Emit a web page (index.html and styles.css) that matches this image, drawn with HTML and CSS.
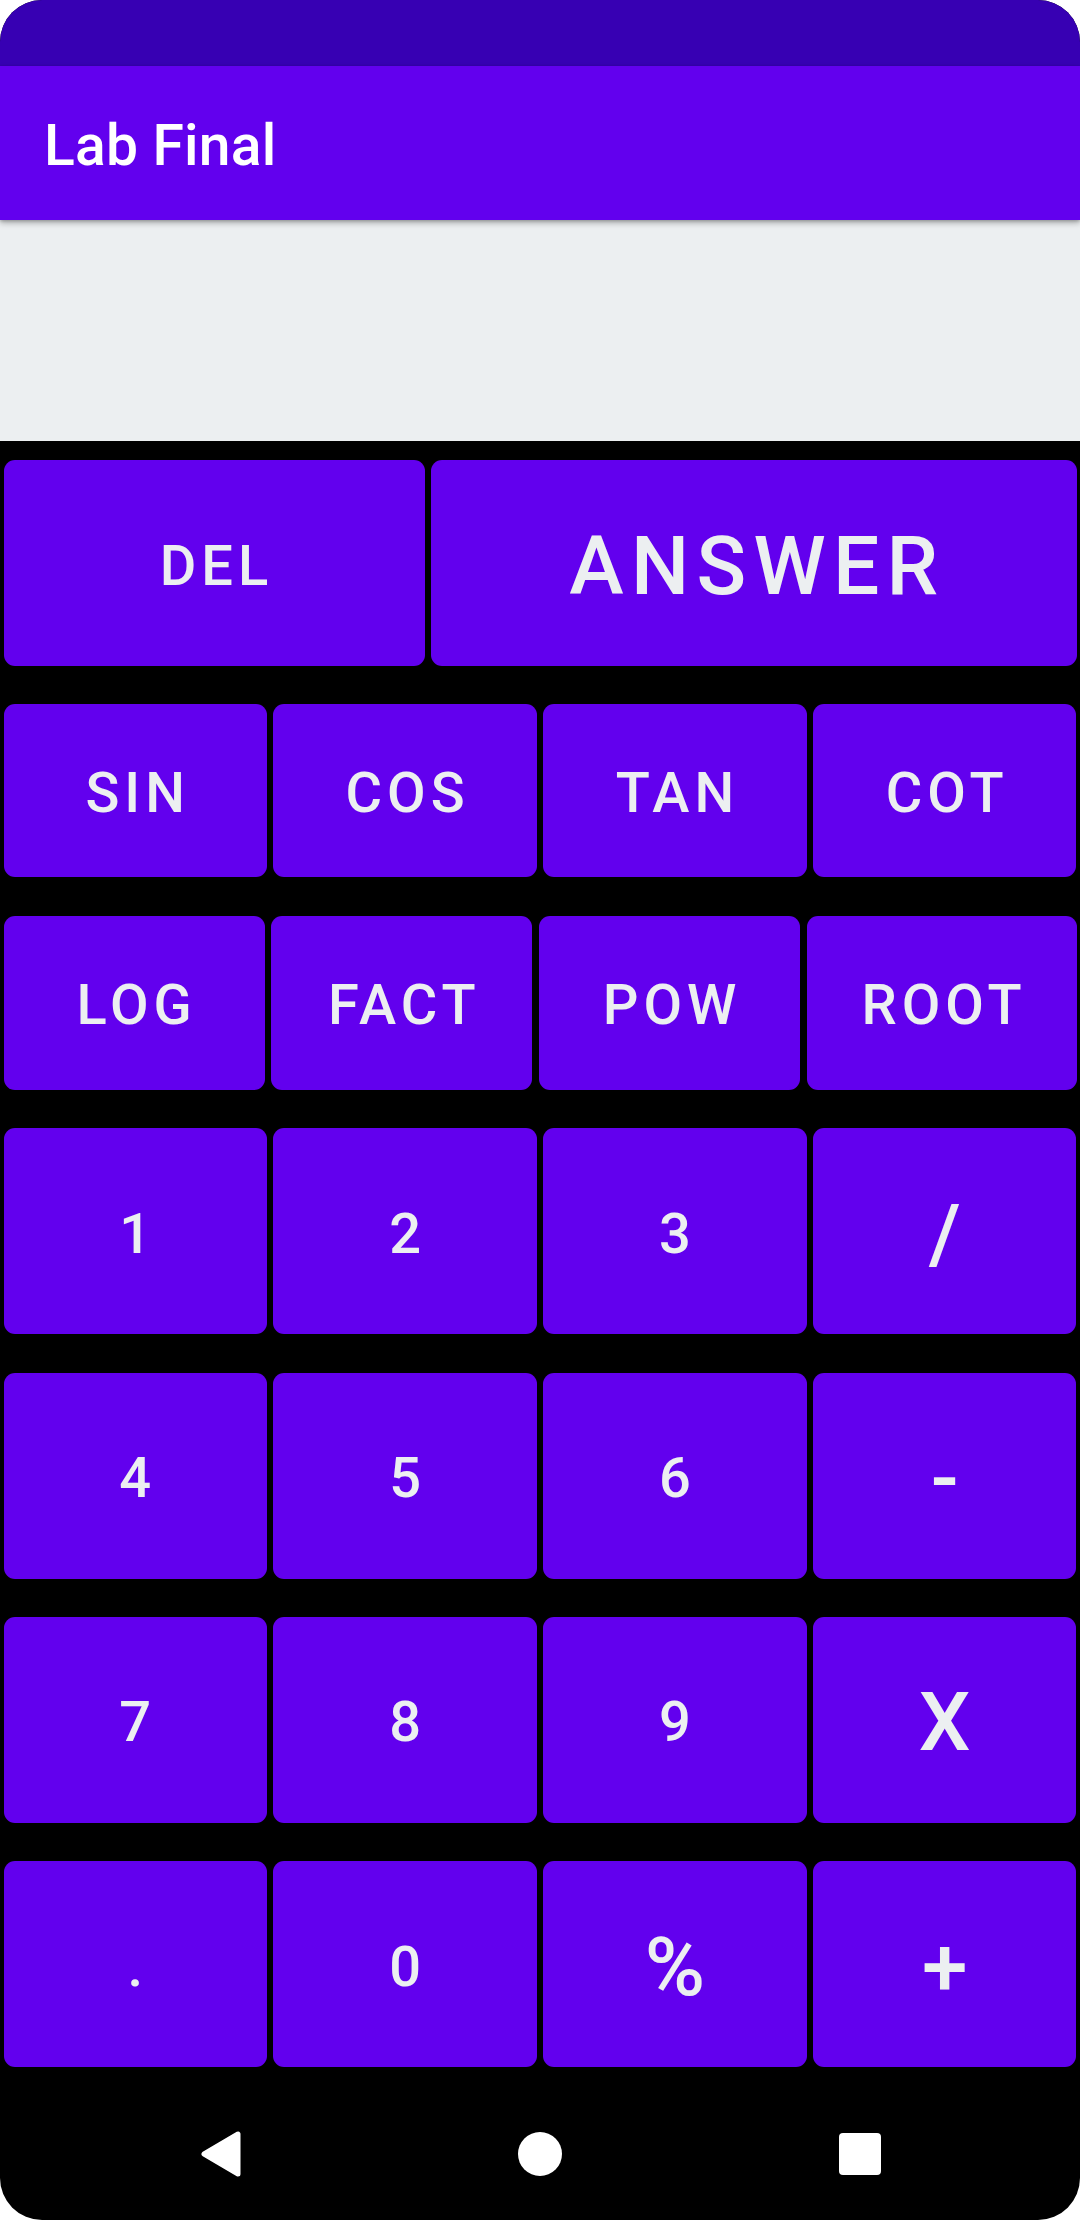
FILE: index.html
```html
<!DOCTYPE html>
<html>
<head>
<meta charset="utf-8">
<title>Lab Final</title>
<link rel="stylesheet" href="styles.css">
</head>
<body>
<div class="phone">
  <div class="status"></div>
  <header class="appbar"><span class="title">Lab Final</span></header>
  <div class="display"></div>
  <main class="keypad">
    <div class="row row-top">
      <button class="key key-del">DEL</button>
      <button class="key key-answer big">ANSWER</button>
    </div>
    <div class="row row-fn">
      <button class="key">SIN</button>
      <button class="key">COS</button>
      <button class="key">TAN</button>
      <button class="key">COT</button>
    </div>
    <div class="row row-fn row-fn2">
      <button class="key">LOG</button>
      <button class="key">FACT</button>
      <button class="key">POW</button>
      <button class="key key-root">ROOT</button>
    </div>
    <div class="row row-num">
      <button class="key">1</button>
      <button class="key">2</button>
      <button class="key">3</button>
      <button class="key big">/</button>
    </div>
    <div class="row row-num">
      <button class="key">4</button>
      <button class="key">5</button>
      <button class="key">6</button>
      <button class="key big">-</button>
    </div>
    <div class="row row-num">
      <button class="key">7</button>
      <button class="key">8</button>
      <button class="key">9</button>
      <button class="key big">X</button>
    </div>
    <div class="row row-num">
      <button class="key">.</button>
      <button class="key">0</button>
      <button class="key big">%</button>
      <button class="key big">+</button>
    </div>
  </main>
  <nav class="navbar">
    <div class="nav-slot">
      <svg width="40" height="46" viewBox="0 0 40 46"><path d="M37 3 L37 43 L3 23 Z" fill="#fff" stroke="#fff" stroke-width="5" stroke-linejoin="round"/></svg>
    </div>
    <div class="nav-slot"><span class="nav-home"></span></div>
    <div class="nav-slot"><span class="nav-recent"></span></div>
  </nav>
</div>
</body>
</html>
```
FILE: styles.css
```css
html, body {
  margin: 0;
  padding: 0;
  background: #ffffff;
}

.phone {
  width: 1080px;
  height: 2220px;
  border-radius: 42px;
  overflow: hidden;
  background: #000000;
  display: flex;
  flex-direction: column;
  font-family: Roboto, "Noto Sans", "Liberation Sans", sans-serif;
}

.status {
  height: 66px;
  background: #3700b3;
  flex: none;
}

.appbar {
  height: 154px;
  flex: none;
  background: #6200ee;
  display: flex;
  align-items: center;
  padding-left: 44px;
  box-shadow: 0 3px 6px rgba(0, 0, 0, 0.28), 0 1px 3px rgba(0, 0, 0, 0.2);
  position: relative;
  z-index: 1;
}

.title {
  color: #ffffff;
  font-size: 57px;
  font-weight: 500;
  letter-spacing: 0.2px;
  padding-top: 4px;
}

.display {
  height: 221px;
  flex: none;
  background: #eceff1;
}

.keypad {
  height: 1647px;
  flex: none;
  box-sizing: border-box;
  padding: 19px 3.5px 0 3.5px;
  display: flex;
  flex-direction: column;
  gap: 38.4px;
}

.row {
  display: flex;
  gap: 6.4px;
  height: 206px;
  flex: none;
}

.row-fn {
  height: 173px;
}

.row-fn2 {
  height: 174px;
}

.key {
  flex: 1 1 0;
  min-width: 0;
  border: none;
  margin: 0;
  padding: 5px 0 0 0;
  background: #6200ee;
  border-radius: 11px;
  color: #eceff1;
  font-family: Roboto, "Noto Sans", "Liberation Sans", sans-serif;
  font-weight: 500;
  font-size: 56px;
  letter-spacing: 0.0892em;
  text-indent: 0.0892em;
  display: flex;
  align-items: center;
  justify-content: center;
}

.key.big {
  font-size: 82px;
}

.key-del {
  flex: 0 0 421px;
}

.key-answer {
  flex: 1 1 0;
}

.row-fn2 .key {
  flex: 0 0 261.3px;
}

.row-fn2 .key-root {
  flex: 1 1 0;
}

.navbar {
  flex: 1;
  display: flex;
  align-items: center;
  justify-content: center;
  gap: 239.5px;
}

.nav-slot {
  width: 80px;
  height: 60px;
  display: flex;
  align-items: center;
  justify-content: center;
}

.nav-home {
  width: 44px;
  height: 44px;
  border-radius: 50%;
  background: #ffffff;
}

.nav-recent {
  width: 42px;
  height: 42px;
  border-radius: 4px;
  background: #ffffff;
}
```
